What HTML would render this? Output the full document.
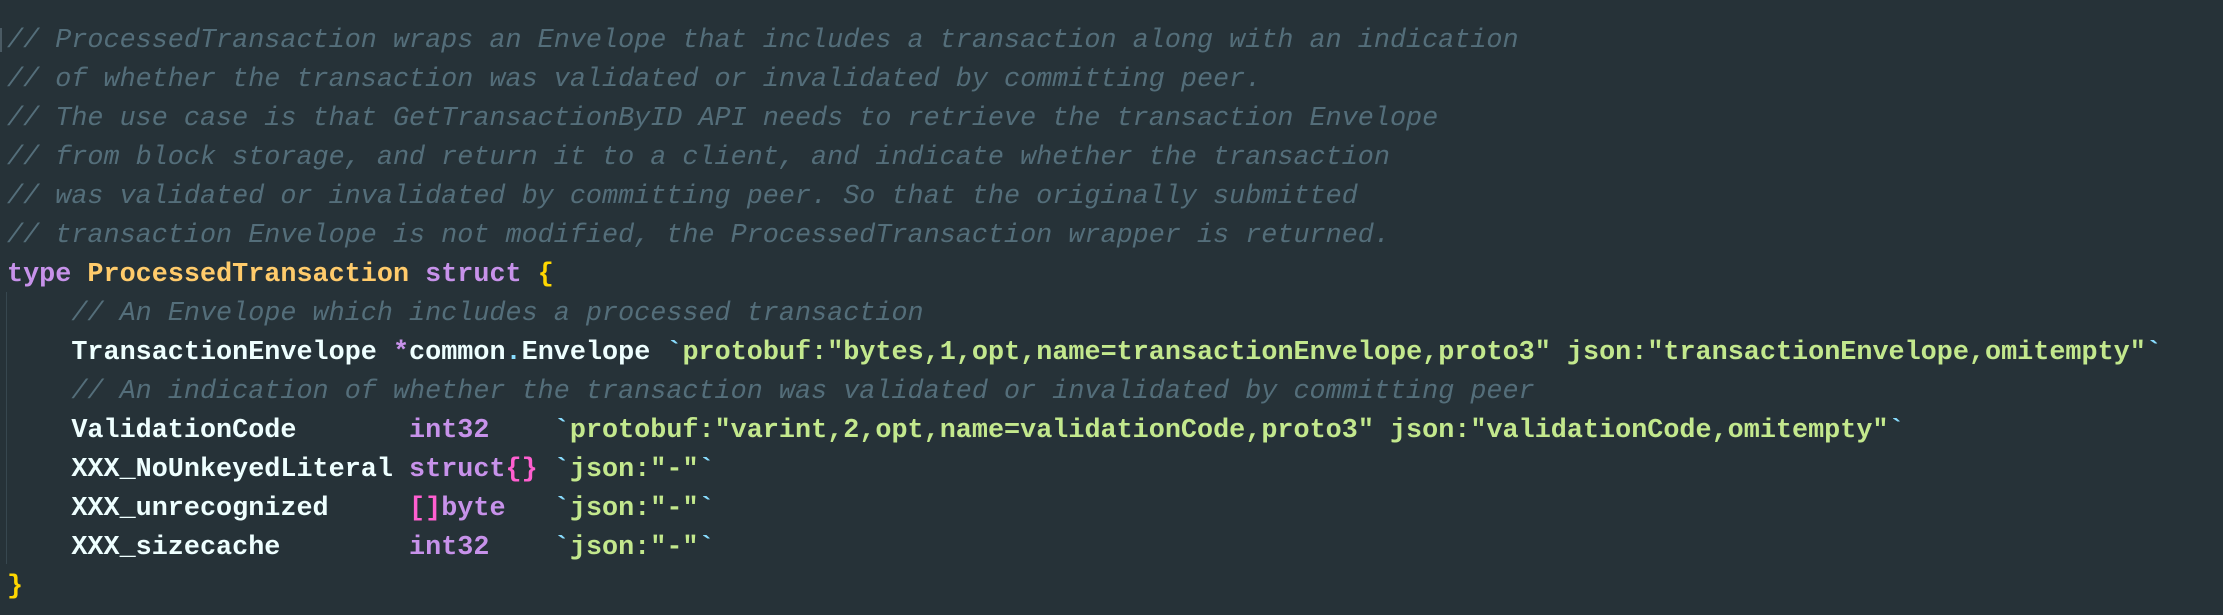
<!DOCTYPE html>
<html><head><meta charset="utf-8"><style>
html,body{margin:0;padding:0;background:#263238;width:2223px;height:615px;overflow:hidden}
pre{margin:0;position:absolute;left:7px;top:22px;font-family:"Liberation Mono",monospace;font-size:26.8px;line-height:39px;color:#eeffff;font-weight:bold}
.c{color:#546e7a;font-style:italic;font-weight:normal}
.k{color:#c792ea}
.t{color:#ffcb6b}
.b{color:#ffd700}
.s{color:#c3e88d}
.q{color:#89ddff}
.p{color:#ff5fd0}
.guide{position:absolute;left:6px;top:292px;width:1px;height:272px;background:#37474f}
.mark{position:absolute;left:0;top:28px;width:2px;height:24px;background:#4a5a63}
</style></head><body>
<div class="guide"></div><div class="mark"></div>
<pre><span class="c">// ProcessedTransaction wraps an Envelope that includes a transaction along with an indication
// of whether the transaction was validated or invalidated by committing peer.
// The use case is that GetTransactionByID API needs to retrieve the transaction Envelope
// from block storage, and return it to a client, and indicate whether the transaction
// was validated or invalidated by committing peer. So that the originally submitted
// transaction Envelope is not modified, the ProcessedTransaction wrapper is returned.</span>
<span class="k">type</span> <span class="t">ProcessedTransaction</span> <span class="k">struct</span> <span class="b">{</span>
    <span class="c">// An Envelope which includes a processed transaction</span>
    TransactionEnvelope <span class="k">*</span>common<span class="q">.</span>Envelope <span class="q">`</span><span class="s">protobuf:"bytes,1,opt,name=transactionEnvelope,proto3" json:"transactionEnvelope,omitempty"</span><span class="q">`</span>
    <span class="c">// An indication of whether the transaction was validated or invalidated by committing peer</span>
    ValidationCode       <span class="k">int32</span>    <span class="q">`</span><span class="s">protobuf:"varint,2,opt,name=validationCode,proto3" json:"validationCode,omitempty"</span><span class="q">`</span>
    XXX_NoUnkeyedLiteral <span class="k">struct</span><span class="p">{}</span> <span class="q">`</span><span class="s">json:"-"</span><span class="q">`</span>
    XXX_unrecognized     <span class="p">[]</span><span class="k">byte</span>   <span class="q">`</span><span class="s">json:"-"</span><span class="q">`</span>
    XXX_sizecache        <span class="k">int32</span>    <span class="q">`</span><span class="s">json:"-"</span><span class="q">`</span>
<span class="b">}</span></pre>
</body></html>
